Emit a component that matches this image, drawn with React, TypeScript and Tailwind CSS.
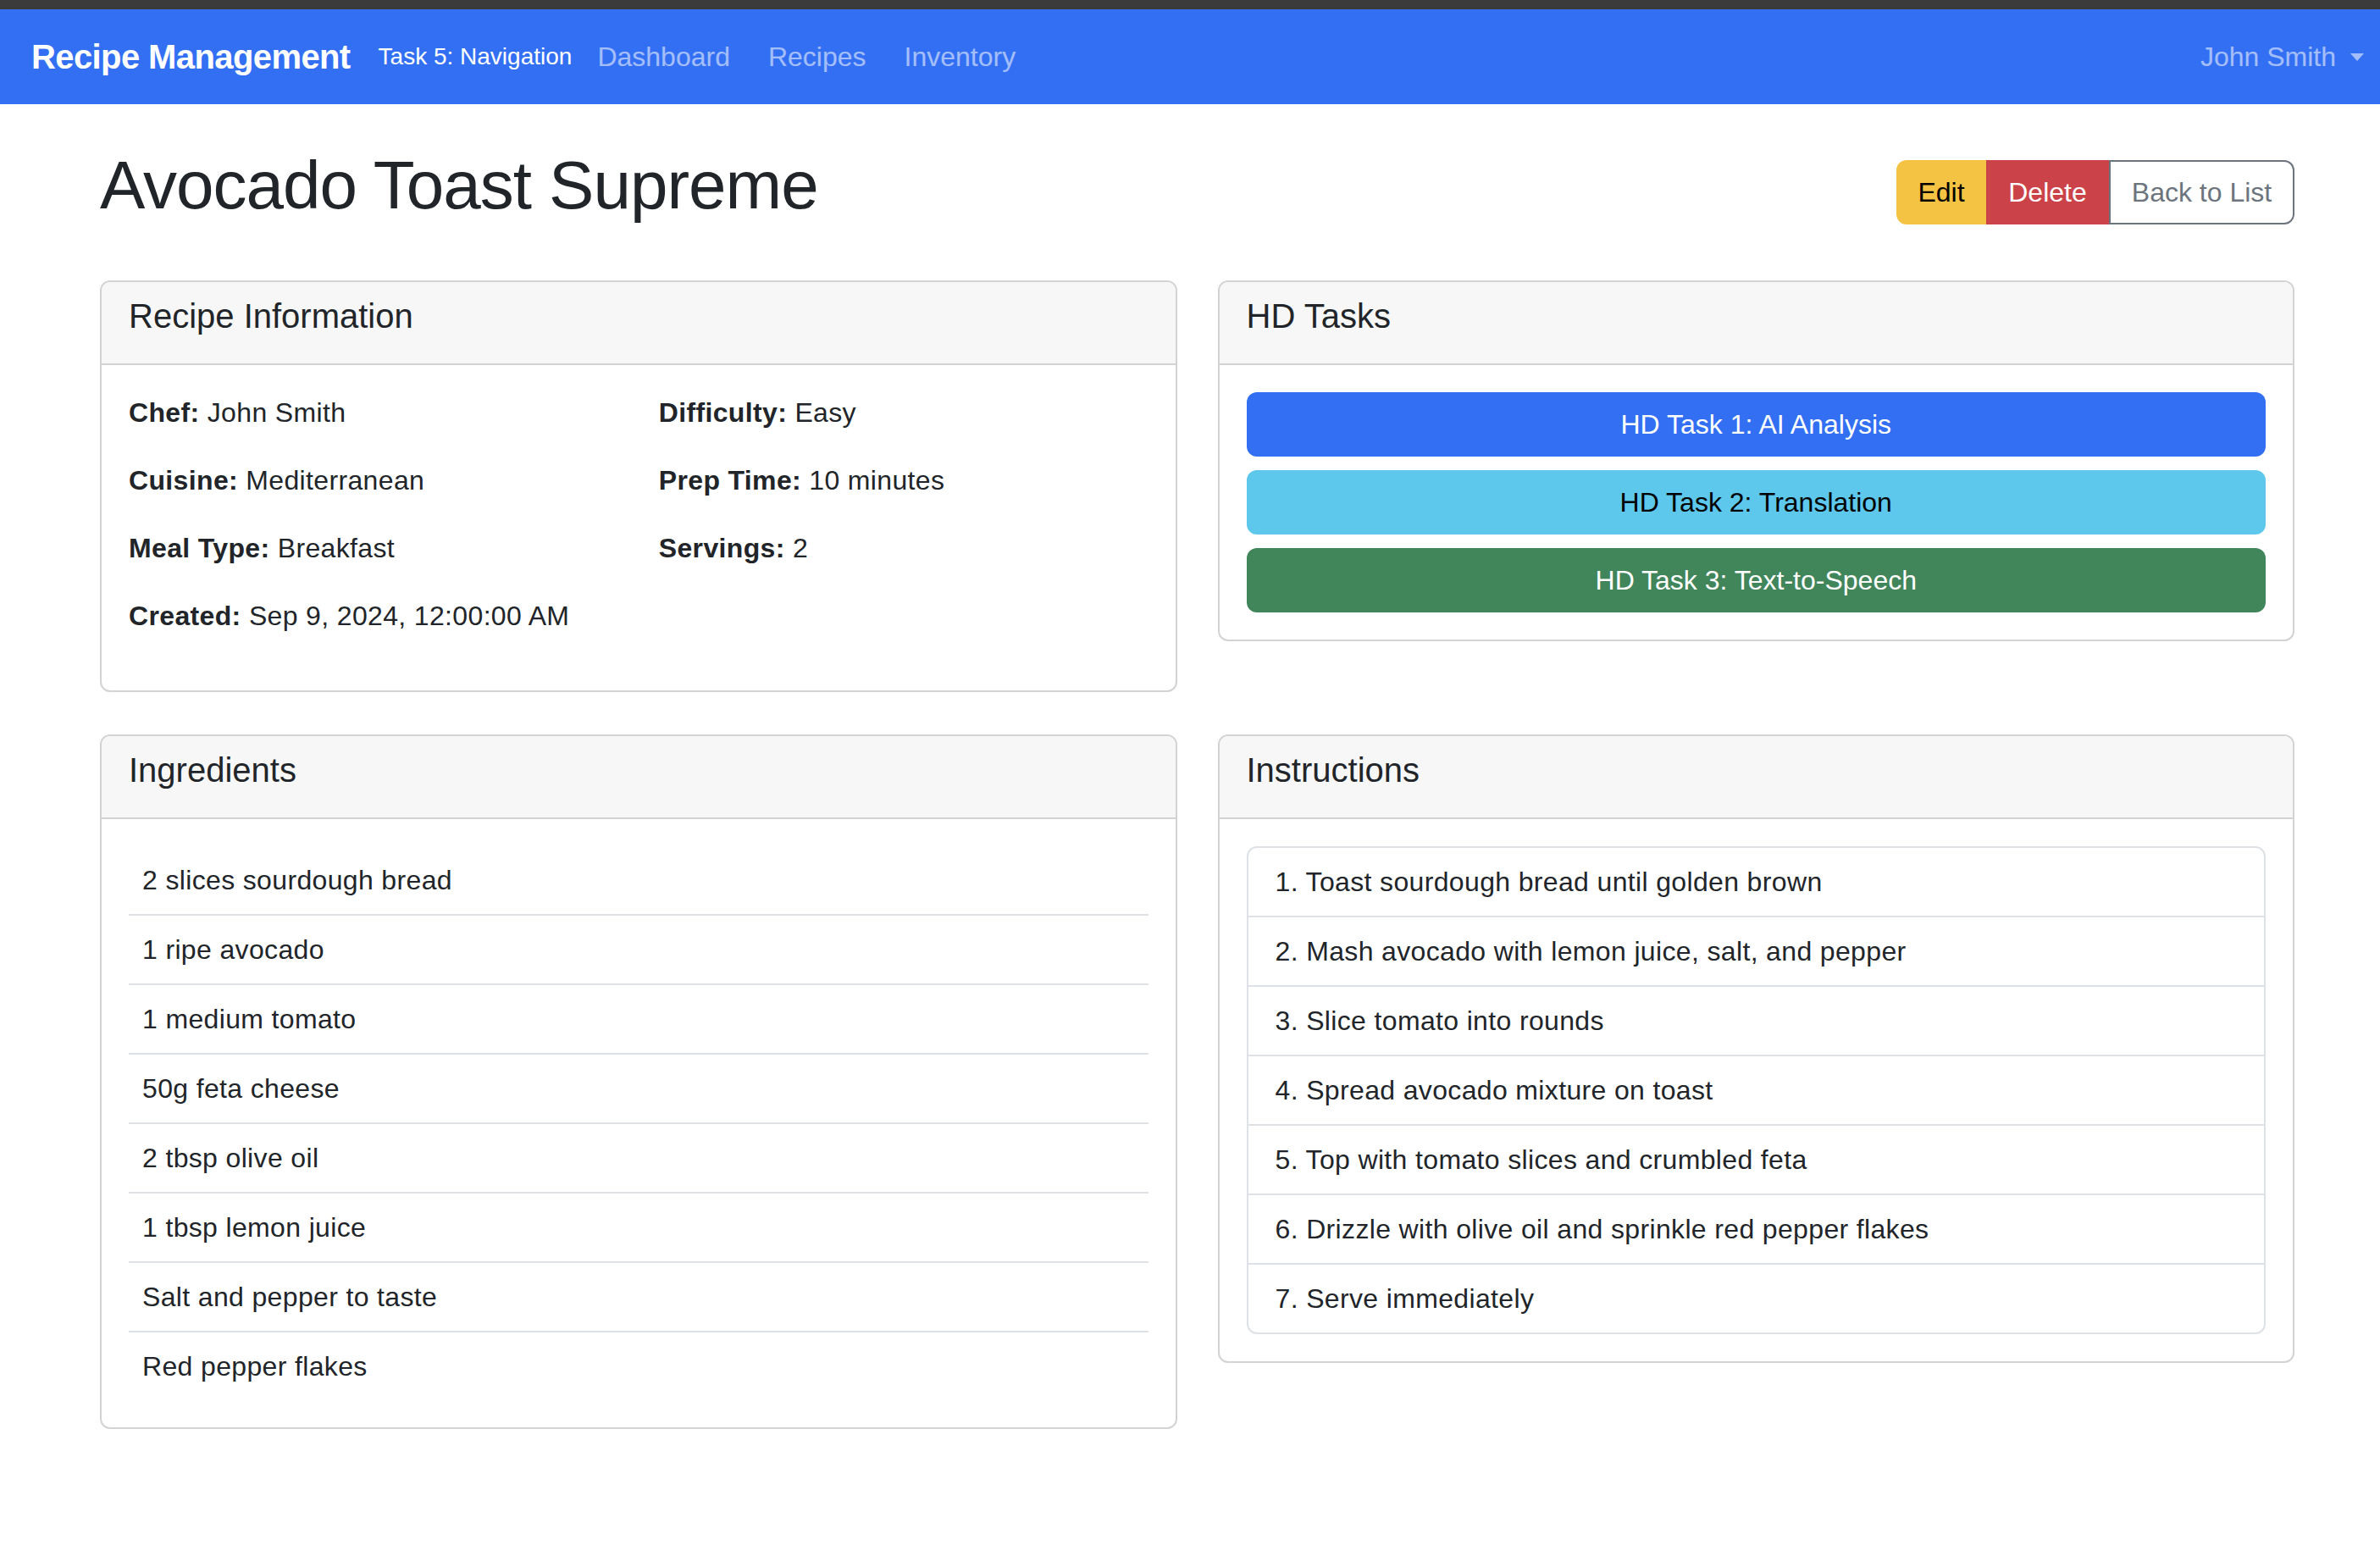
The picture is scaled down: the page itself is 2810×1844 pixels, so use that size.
import React from "react";

const ingredients = [
  "2 slices sourdough bread",
  "1 ripe avocado",
  "1 medium tomato",
  "50g feta cheese",
  "2 tbsp olive oil",
  "1 tbsp lemon juice",
  "Salt and pepper to taste",
  "Red pepper flakes",
];

const steps = [
  "Toast sourdough bread until golden brown",
  "Mash avocado with lemon juice, salt, and pepper",
  "Slice tomato into rounds",
  "Spread avocado mixture on toast",
  "Top with tomato slices and crumbled feta",
  "Drizzle with olive oil and sprinkle red pepper flakes",
  "Serve immediately",
];

function Card({ title, children }: { title: string; children: React.ReactNode }) {
  return (
    <div className="border-2 border-[#d3d3d3] rounded-[12px] overflow-hidden bg-white">
      <div className="bg-[#f7f7f7] border-b-2 border-[#d3d3d3] px-[32px] py-[16px]">
        <h5 className="text-[40px] leading-[1.2] mb-[16px] font-medium">{title}</h5>
      </div>
      <div className="p-[32px] tracking-[0.35px]">{children}</div>
    </div>
  );
}

function Info({ label, value }: { label: string; value: string }) {
  return (
    <p className="leading-[48px] mb-[32px]">
      <strong className="font-bold">{label}</strong> {value}
    </p>
  );
}

export default function App() {
  return (
    <div className="min-h-screen bg-white text-[#212529] text-[32px] font-['Liberation_Sans',Arial,sans-serif]">
      <div className="h-[11px] bg-[#3b3b3b]" />
      {/* navbar */}
      <nav className="h-[112px] bg-[#336ff3] flex items-center pl-[37px] pr-[19px]">
        <span className="text-[40px] font-bold text-white tracking-[-0.6px] mr-[33px]">
          Recipe Management
        </span>
        <span className="text-[28px] text-white mr-[30px]">Task 5: Navigation</span>
        <div className="flex gap-[45px] text-[32px] text-white/55">
          <span>Dashboard</span>
          <span>Recipes</span>
          <span>Inventory</span>
        </div>
        <div className="ml-auto flex items-center gap-[17px] text-[32px] text-white/55">
          <span>John Smith</span>
          <span className="w-0 h-0 border-l-[8px] border-r-[8px] border-t-[9px] border-l-transparent border-r-transparent border-t-white/55" />
        </div>
      </nav>

      <main className="pl-[118px] pr-[101px] pt-[48px]">
        <div className="flex items-center justify-between mb-[48px]">
          <h1 className="text-[80px] leading-[1.2] font-medium tracking-[-1px] mb-[16px]">
            Avocado Toast Supreme
          </h1>
          <div className="flex h-[76px] text-[32px]">
            <button className="w-[106px] bg-[#f5c343] text-black rounded-l-[12px]">Edit</button>
            <button className="w-[145px] bg-[#cb4349] text-white">Delete</button>
            <button className="w-[219px] border-2 border-[#6c757d] text-[#6c757d] rounded-r-[12px]">
              Back to List
            </button>
          </div>
        </div>

        <div className="grid grid-cols-2 gap-x-[48px] gap-y-[50px] items-start">
          <Card title="Recipe Information">
            <div className="grid grid-cols-2 gap-x-[48px]">
              <div>
                <Info label="Chef:" value="John Smith" />
                <Info label="Cuisine:" value="Mediterranean" />
                <Info label="Meal Type:" value="Breakfast" />
                <Info label="Created:" value="Sep 9, 2024, 12:00:00 AM" />
              </div>
              <div>
                <Info label="Difficulty:" value="Easy" />
                <Info label="Prep Time:" value="10 minutes" />
                <Info label="Servings:" value="2" />
              </div>
            </div>
          </Card>

          <Card title="HD Tasks">
            <div className="flex flex-col gap-[16px] tracking-normal">
              <button className="h-[76px] rounded-[12px] bg-[#336ff3] text-white">
                HD Task 1: AI Analysis
              </button>
              <button className="h-[76px] rounded-[12px] bg-[#5dc7ec] text-black">
                HD Task 2: Translation
              </button>
              <button className="h-[76px] rounded-[12px] bg-[#41855b] text-white">
                HD Task 3: Text-to-Speech
              </button>
            </div>
          </Card>

          <Card title="Ingredients">
            <ul>
              {ingredients.map((item, i) => (
                <li
                  key={item}
                  className={`px-[16px] py-[16px] leading-[48px] ${
                    i < ingredients.length - 1 ? "border-b-2 border-[#dee2e6]" : ""
                  }`}
                >
                  {item}
                </li>
              ))}
            </ul>
          </Card>

          <Card title="Instructions">
            <ol className="border-2 border-[#dee2e6] rounded-[12px]">
              {steps.map((step, i) => (
                <li
                  key={step}
                  className={`px-[32px] py-[16px] leading-[48px] ${
                    i < steps.length - 1 ? "border-b-2 border-[#dee2e6]" : ""
                  }`}
                >
                  {i + 1}. {step}
                </li>
              ))}
            </ol>
          </Card>
        </div>
      </main>
    </div>
  );
}
